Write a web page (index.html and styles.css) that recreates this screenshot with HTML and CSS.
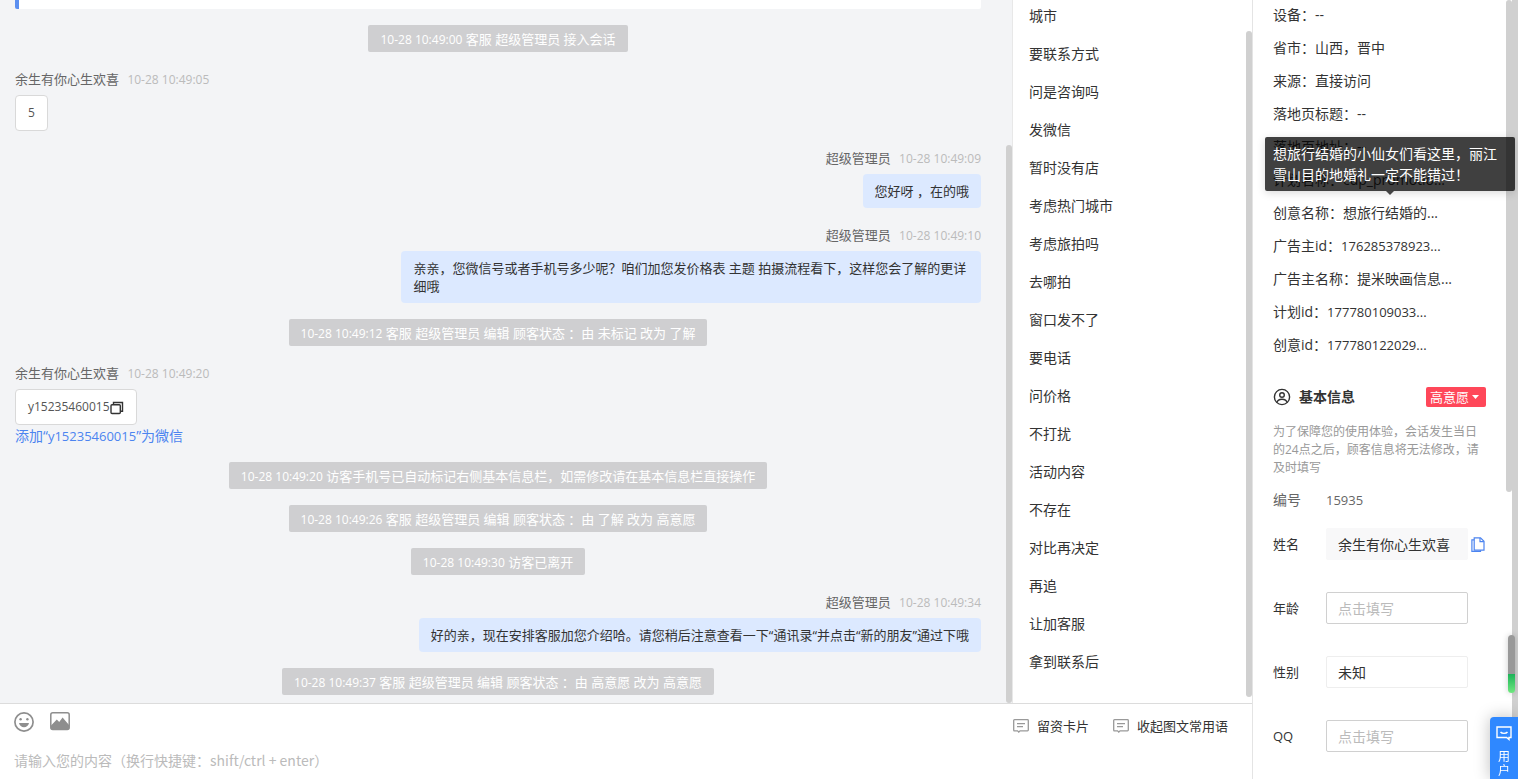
FILE: index.html
```html
<!DOCTYPE html>
<html lang="zh-CN">

<head>
    <meta charset="UTF-8">
    <meta name="viewport" content="width=device-width, initial-scale=1.0">
    <title>客服会话</title>
    <link rel="stylesheet" href="styles.css">
</head>

<body>

<main class="workspace">
    <div class="top">
        <!-- 聊天记录 -->
        <section class="chat">
            <div class="card-end"></div>
            <p class="notice"><time>10-28 10:49:00</time> 客服 超级管理员 接入会话</p>

            <div class="message">
                <div class="meta">余生有你心生欢喜 <time>10-28 10:49:05</time></div>
                <div class="bubble"><span class="num">5</span></div>
            </div>

            <div class="message mine">
                <div class="meta">超级管理员 <time>10-28 10:49:09</time></div>
                <div class="bubble">您好呀 ，在的哦</div>
            </div>

            <div class="message mine">
                <div class="meta">超级管理员 <time>10-28 10:49:10</time></div>
                <div class="bubble">亲亲，您微信号或者手机号多少呢？咱们加您发价格表 主题 拍摄流程看下，这样您会了解的更详细哦</div>
            </div>

            <p class="notice"><time>10-28 10:49:12</time> 客服 超级管理员 编辑 顾客状态 ：由 未标记 改为 了解</p>

            <div class="message">
                <div class="meta">余生有你心生欢喜 <time>10-28 10:49:20</time></div>
                <div class="bubble">
                    <span class="num">y15235460015</span>
                    <button class="copy" aria-label="复制">
                        <svg width="14" height="14" viewBox="0 0 14 14" fill="none" stroke="#333" stroke-width="1.4">
                            <rect x="1" y="3.7" width="9.3" height="8.8" rx="1"/>
                            <path d="M3.5 3.5V1.5h9v8.8h-2"/>
                        </svg>
                    </button>
                </div>
                <a class="add-wechat" href="#">添加“<span class="num">y15235460015</span>”为微信</a>
            </div>

            <p class="notice"><time>10-28 10:49:20</time> 访客手机号已自动标记右侧基本信息栏，如需修改请在基本信息栏直接操作</p>
            <p class="notice"><time>10-28 10:49:26</time> 客服 超级管理员 编辑 顾客状态 ：由 了解 改为 高意愿</p>
            <p class="notice"><time>10-28 10:49:30</time> 访客已离开</p>

            <div class="message mine">
                <div class="meta">超级管理员 <time>10-28 10:49:34</time></div>
                <div class="bubble">好的亲，现在安排客服加您介绍哈。请您稍后注意查看一下“通讯录“并点击“新的朋友”通过下哦</div>
            </div>

            <p class="notice"><time>10-28 10:49:37</time> 客服 超级管理员 编辑 顾客状态 ：由 高意愿 改为 高意愿</p>
            <span class="thumb chat-thumb"></span>
        </section>

        <!-- 常用语 -->
        <nav class="phrases">
            <ul>
                <li>城市</li>
                <li>要联系方式</li>
                <li>问是咨询吗</li>
                <li>发微信</li>
                <li>暂时没有店</li>
                <li>考虑热门城市</li>
                <li>考虑旅拍吗</li>
                <li>去哪拍</li>
                <li>窗口发不了</li>
                <li>要电话</li>
                <li>问价格</li>
                <li>不打扰</li>
                <li>活动内容</li>
                <li>不存在</li>
                <li>对比再决定</li>
                <li>再追</li>
                <li>让加客服</li>
                <li>拿到联系后</li>
            </ul>
            <span class="thumb phrases-thumb"></span>
        </nav>
    </div>

    <!-- 输入区 -->
    <section class="editor">
        <div class="toolbar">
            <button class="tool" aria-label="表情">
                <svg width="20" height="20" viewBox="0 0 20 20">
                    <circle cx="10" cy="10" r="9.1" fill="none" stroke="#8e8e8e" stroke-width="1.7"/>
                    <circle cx="6.6" cy="7.2" r="1.2" fill="#8e8e8e"/>
                    <circle cx="13.4" cy="7.2" r="1.2" fill="#8e8e8e"/>
                    <path d="M5 11h10c-.5 2.6-2.5 4.2-5 4.2S5.500 13.600 5 11z" fill="#8e8e8e"/>
                </svg>
            </button>
            <button class="tool" aria-label="图片">
                <svg width="20" height="20" viewBox="0 0 20 20">
                    <rect x=".8" y=".8" width="18.4" height="16.6" rx="2" fill="none" stroke="#8e8e8e" stroke-width="1.5"/>
                    <path d="M1 13.500L6.800 7.500l2.400 2.500L12.600 5.500 19 13v4.200H1z" fill="#8e8e8e"/>
                </svg>
            </button>
            <button class="text-tool first">
                <svg width="16" height="14" viewBox="0 0 16 14" fill="none" stroke="#999" stroke-width="1.3">
                    <path d="M1.500.7h13q.8 0 .8.8v9.600q0 .8-.8.8H7l-1.200 1.200L4.600 11.900H1.500q-.8 0-.8-.8V1.500q0-.8.8-.8zM4 4.700h8M4 7.700h6"/>
                </svg>
                留资卡片
            </button>
            <button class="text-tool">
                <svg width="16" height="14" viewBox="0 0 16 14" fill="none" stroke="#999" stroke-width="1.3">
                    <path d="M1.500.7h13q.8 0 .8.8v9.600q0 .8-.8.8H7l-1.200 1.200L4.600 11.900H1.500q-.8 0-.8-.8V1.500q0-.8.8-.8zM4 4.700h8M4 7.700h6"/>
                </svg>
                收起图文常用语
            </button>
        </div>
        <textarea class="reply" rows="1" aria-label="回复内容" placeholder="请输入您的内容（换行快捷键：shift/ctrl + enter）"></textarea>
    </section>
</main>

<!-- 访客信息 -->
<aside class="visitor">
    <ul class="details">
        <li>设备：--</li>
        <li>省市：山西，晋中</li>
        <li>来源：直接访问</li>
        <li>落地页标题：--</li>
        <li>落地页地址：--</li>
        <li>计划名称：cdp_promotio...</li>
        <li class="has-tip">创意名称：想旅行结婚的...
            <span class="tooltip" role="tooltip">想旅行结婚的小仙女们看这里，丽江雪山目的地婚礼一定不能错过！</span>
        </li>
        <li>广告主id：<span class="num">176285378923...</span></li>
        <li>广告主名称：提米映画信息...</li>
        <li>计划id：<span class="num">177780109033...</span></li>
        <li>创意id：<span class="num">177780122029...</span></li>
    </ul>

    <div class="section-title">
        <svg width="18" height="18" viewBox="0 0 18 18" fill="none" stroke="#333" stroke-width="1.4">
            <circle cx="9" cy="9" r="7.6"/>
            <circle cx="9" cy="7" r="2.3"/>
            <path d="M4 14.500c.5-2.600 2-3.300 5-3.300s4.500.7 5 3.300"/>
        </svg>
        <h2>基本信息</h2>
        <button class="tag">高意愿<svg width="7" height="4" viewBox="0 0 7 4"><path d="M0 0h7L3.500 4z" fill="#fff"/></svg></button>
    </div>
    <p class="hint">为了保障您的使用体验，会话发生当日的24点之后，顾客信息将无法修改，请及时填写</p>

    <form class="info">
        <div class="row id-row">
            <span>编号</span>
            <span class="num">15935</span>
        </div>
        <div class="row">
            <label for="name">姓名</label>
            <input id="name" class="filled" type="text" value="余生有你心生欢喜">
            <button type="button" class="copy" aria-label="复制姓名">
                <svg width="14" height="15" viewBox="0 0 14 15" fill="none" stroke="#4c84f0" stroke-width="1.2">
                    <path d="M3.200.8H9.500L13 4.200v9H3.200z"/>
                    <path d="M9 1v3.600h3.800M3.200 2.800H.9V14.300h8.600V13.200"/>
                </svg>
            </button>
        </div>
        <div class="row">
            <label for="age">年龄</label>
            <input id="age" type="text" placeholder="点击填写">
        </div>
        <div class="row">
            <label for="gender">性别</label>
            <select id="gender">
                <option>未知</option>
            </select>
        </div>
        <div class="row">
            <label for="qq">QQ</label>
            <input id="qq" type="text" placeholder="点击填写">
        </div>
    </form>
    <span class="thumb visitor-thumb"></span>
    <span class="page-scroll"></span>
    <span class="gauge"></span>
</aside>

<button class="feedback">
    <svg width="16" height="15" viewBox="0 0 16 15" fill="none" stroke="#fff" stroke-width="1.4">
        <path d="M1 1h14v10.500h-2v2l-2.400-2H1z"/>
        <path d="M4.500 6c1.500 1.800 5.500 1.800 7 0"/>
    </svg>
    <span>用户</span>
</button>

</body>
</html>
```
FILE: styles.css
```css
* {
    box-sizing: border-box;
}
body {
    display: flex;
    height: 100vh;
    margin: 0;
    overflow: hidden;
    background: #fff;
    color: #333;
    font: 14px/18px "Open Sans", "Noto Sans CJK SC", sans-serif;
}
ul, p, h2 {
    margin: 0;
    padding: 0;
    list-style: none;
}
button {
    padding: 0;
    border: 0;
    background: none;
    color: inherit;
    font: inherit;
    cursor: pointer;
}
.workspace {
    display: flex;
    flex: 1;
    flex-direction: column;
    min-width: 0;
}
.top {
    display: flex;
    flex: 1;
    min-height: 0;
}
.thumb {
    position: absolute;
    right: 0;
    width: 6px;
    border-radius: 3px;
    background: #d0d0d0;
}

/* Chat */
.chat {
    position: relative;
    display: flex;
    flex: 1;
    flex-direction: column;
    gap: 16px;
    min-width: 0;
    padding: 0 31px 8px 15px;
    overflow: hidden;
    background: #f3f4f6;
    font-size: 13px;
}
.card-end {
    flex-shrink: 0;
    height: 9px;
    border-left: 4px solid #5b8ff0;
    border-radius: 0 0 2px 2px;
    background: #fff;
}
.notice {
    align-self: center;
    padding: 5px 12px 4px;
    border-radius: 2px;
    background: #cfcfd1;
    color: #fff;
}
time {
    font-size: 12px;
    line-height: 1;
}
.message {
    display: flex;
    flex-direction: column;
    align-items: flex-start;
}
.mine {
    align-items: flex-end;
}
.meta {
    margin-bottom: 5px;
    line-height: 22px;
    color: #666;
}
.meta time {
    margin-left: 5px;
    color: #bbb;
}
.bubble {
    display: flex;
    max-width: 60%;
    padding: 8px 12px;
    border: 1px solid #d9d9d9;
    border-radius: 4px;
    background: #fff;
    color: #555;
}
.mine .bubble {
    border: 0;
    background: #dce9ff;
    color: #333;
}
.num {
    font-size: 13px;
    line-height: 1;
}
.bubble .num {
    font-size: 12px;
    line-height: 18px;
}
.bubble .copy {
    padding-top: 2px;
}
.copy svg {
    display: block;
}
.add-wechat {
    color: #4c84f0;
    font-size: 14px;
    line-height: 21px;
    text-decoration: none;
}
.chat-thumb {
    top: 145px;
    bottom: 0;
}

/* Phrases */
.phrases {
    position: relative;
    width: 240px;
    padding-left: 16px;
    overflow: hidden;
    border-left: 1px solid #e8e8e8;
}
.phrases ul {
    margin-top: -3px;
    line-height: 38px;
}
.phrases-thumb {
    top: 31px;
    bottom: 6px;
}

/* Editor */
.editor {
    border-top: 1px solid #dcdcdc;
    padding: 8px 24px 7px 14px;
}
.toolbar {
    display: flex;
    align-items: flex-start;
    gap: 16px;
    height: 28px;
}
.tool {
    height: 20px;
    line-height: 0;
}
.text-tool {
    display: flex;
    align-items: center;
    gap: 8px;
    margin-left: 8px;
    padding-top: 5px;
    font-size: 13px;
}
.text-tool.first {
    margin-left: auto;
}
.reply {
    display: block;
    width: 100%;
    height: 32px;
    padding: 10px 0 0;
    overflow: hidden;
    border: 0;
    outline: 0;
    resize: none;
    color: #333;
    font: 14px/20px "Noto Sans CJK SC", sans-serif;
}
::placeholder {
    color: #bbb;
}

/* Visitor */
.visitor {
    position: relative;
    width: 266px;
    padding: 0 32px 0 20px;
    border-left: 1px solid #e4e4e4;
}
.details {
    margin-top: -2px;
    line-height: 33px;
    white-space: nowrap;
}
.has-tip {
    position: relative;
    z-index: 1;
}
.tooltip {
    position: absolute;
    bottom: 38px;
    left: -8px;
    width: 250px;
    padding: 6px 8px;
    border-radius: 2px;
    background: rgba(0, 0, 0, 0.75);
    color: #fff;
    line-height: 21px;
    white-space: normal;
    box-shadow: 0 2px 8px rgba(0, 0, 0, 0.15);
}
.tooltip::after {
    content: "";
    position: absolute;
    top: 100%;
    left: 50%;
    margin-left: -4px;
    border: 4px solid transparent;
    border-top-color: #444;
}
.section-title {
    display: flex;
    align-items: center;
    gap: 8px;
    height: 20px;
    margin: 26px 0 16px;
}
.section-title h2 {
    font-size: 14px;
    font-weight: 600;
}
.tag {
    display: flex;
    align-items: center;
    gap: 3px;
    height: 20px;
    margin-left: auto;
    padding: 0 7px 0 4px;
    border-radius: 2px;
    background: #ff4759;
    color: #fff;
    font-size: 13px;
}
.hint {
    color: #999;
    font-size: 12px;
}
.info {
    display: flex;
    flex-direction: column;
    gap: 32px;
}
.row {
    display: flex;
    align-items: center;
    height: 32px;
    font-size: 13px;
}
.row > :first-child {
    width: 53px;
}
.id-row {
    height: 18px;
    margin: 14px 0 -13px;
    color: #666;
    font-size: 14px;
}
.row input, .row select {
    width: 142px;
    height: 32px;
    padding: 0 11px;
    border: 1px solid #d0d0d0;
    border-radius: 2px;
    background: #fff;
    color: #333;
    font: 14px "Open Sans", "Noto Sans CJK SC", sans-serif;
}
.row select {
    appearance: none;
    border-color: #eee;
}
.row .filled {
    border-color: #f8f8f9;
    background: #f8f8f9;
}
.row .copy {
    margin-left: 3px;
}
.visitor-thumb {
    top: 0;
    right: 6px;
    height: 492px;
}
.page-scroll {
    position: absolute;
    top: 0;
    right: 0;
    bottom: 0;
    width: 6px;
    background: #d0d0d0;
}
.gauge {
    position: absolute;
    top: 635px;
    right: 3px;
    width: 7px;
    height: 58px;
    border-radius: 4px;
    background: linear-gradient(#999 0 68%, #1fb45a 68%, #6fe87f);
    box-shadow: 0 0 6px rgba(0, 0, 0, 0.2);
}
.feedback {
    position: fixed;
    right: 0;
    bottom: 0;
    display: flex;
    flex-direction: column;
    align-items: center;
    gap: 9px;
    width: 28px;
    padding: 9px 6px 1px;
    border-radius: 4px 0 0 0;
    background: #2f88ff;
    color: #fff;
    font-size: 12px;
    line-height: 14px;
    box-shadow: 0 0 16px rgba(0, 0, 0, 0.25);
}
```
